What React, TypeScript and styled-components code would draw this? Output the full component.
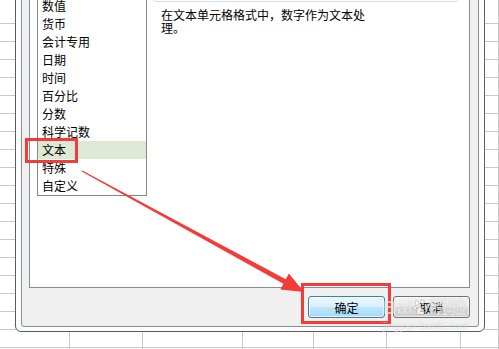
import styled, { createGlobalStyle } from "styled-components";

const GlobalStyle = createGlobalStyle`
  html, body {
    margin: 0;
    padding: 0;
    background: #fff;
    overflow: hidden;
  }
  #root {
    width: 499px;
    height: 349px;
  }
`;

const CJK = `"Noto Sans CJK SC", "Noto Sans", sans-serif`;

const Sheet = styled.div`
  position: relative;
  width: 499px;
  height: 349px;
  display: flex;
  overflow: hidden;
  background-image: repeating-linear-gradient(
    to bottom,
    transparent 0 17px,
    #c8c8c8 17px 18px
  );
  background-position: 0 6px;
`;

const Column = styled.div<{ $w?: number }>`
  flex: ${(p) => (p.$w ? `0 0 ${p.$w}px` : "1")};
  box-sizing: border-box;
  border-right: 1px solid #c8c8c8;
`;

const Dialog = styled.div`
  position: absolute;
  left: 15px;
  top: -40px;
  width: 470px;
  height: 372px;
  box-sizing: border-box;
  border: 1px solid #5c5c5c;
  border-radius: 0 0 6px 6px;
  background: #fbfdfe;
  padding: 5px 5px 4px;
  display: flex;
`;

const Frame = styled.div`
  flex: 1;
  border: 1px solid #8c8c8c;
  border-radius: 0 0 3px 3px;
  background: #f0f0f0;
  padding: 7px 8px 8px 7px;
  display: flex;
  flex-direction: column;
  gap: 8px;
`;

const Panel = styled.div`
  height: 314px;
  box-sizing: border-box;
  border: 1px solid #898c95;
  background: #fff;
  padding: 3px 0 0 7px;
  display: flex;
  align-items: flex-start;
`;

// the first entry (常规) is scrolled out of view above the window
const ListBox = styled.div`
  width: 110px;
  box-sizing: border-box;
  border: 1px solid #828790;
  background: #fff;
  padding-top: 18px;
  display: flex;
  flex-direction: column;
`;

const ListItem = styled.div<{ $selected?: boolean }>`
  height: 18px;
  line-height: 18px;
  padding-left: 4px;
  font-family: ${CJK};
  font-size: 12px;
  color: #000;
  white-space: nowrap;
  background: ${(p) => (p.$selected ? "#dde9d4" : "transparent")};
`;

const RightColumn = styled.div`
  width: 306px;
  margin-left: 6px;
  display: flex;
  flex-direction: column;
`;

const SampleBox = styled.div`
  height: 24px;
  box-sizing: border-box;
  border: 1px solid #d5dfe5;
  border-radius: 3px;
`;

const Description = styled.p`
  margin: 6px 0 0 8px;
  width: 210px;
  font-family: ${CJK};
  font-size: 12px;
  line-height: 13px;
  color: #000;
`;

const ButtonRow = styled.div`
  display: flex;
  justify-content: flex-end;
  gap: 8px;
`;

const Button = styled.button<{ $default?: boolean }>`
  width: 77px;
  height: 22px;
  padding: 0;
  box-sizing: border-box;
  border-radius: 3px;
  font-family: ${CJK};
  font-size: 12px;
  color: #000;
  border: 1px solid ${(p) => (p.$default ? "#3c7fb1" : "#707070")};
  background: ${(p) =>
    p.$default
      ? "linear-gradient(#eaf6fd, #d9f0fc 50%, #bee6fd 50%, #a7d9f5)"
      : "linear-gradient(#f2f2f2, #ebebeb 50%, #dddddd 50%, #cfcfcf)"};
  box-shadow: inset 0 0 0 1px
    ${(p) => (p.$default ? "rgba(255,255,255,0.7)" : "rgba(255,255,255,0.6)")};
`;

const Mark = styled.div<{ $x: number; $y: number; $w: number; $h: number }>`
  position: absolute;
  left: ${(p) => p.$x}px;
  top: ${(p) => p.$y}px;
  width: ${(p) => p.$w}px;
  height: ${(p) => p.$h}px;
  box-sizing: border-box;
  border: 3px solid #f23b3b;
`;

const Overlay = styled.svg`
  position: absolute;
  left: 0;
  top: 0;
  pointer-events: none;
`;

const Watermark = styled.div`
  position: absolute;
  left: 383px;
  top: 297px;
  display: flex;
  flex-direction: column;
  align-items: flex-start;
  color: rgba(255, 255, 255, 0.7);
  text-shadow: 0 0 1px rgba(120, 120, 120, 0.5);
  opacity: 0.8;
  pointer-events: none;
`;

const WatermarkLogo = styled.div`
  display: flex;
  align-items: center;
  font-family: "Liberation Sans", ${CJK};
  font-weight: bold;
  font-size: 19px;
  line-height: 22px;
`;

const WatermarkSite = styled.div`
  font-family: "Liberation Sans", sans-serif;
  font-size: 10px;
  line-height: 12px;
  margin-top: 2px;
  letter-spacing: 0.3px;
`;

const categories = [
  "数值",
  "货币",
  "会计专用",
  "日期",
  "时间",
  "百分比",
  "分数",
  "科学记数",
  "文本",
  "特殊",
  "自定义",
];

const columns = [70, 73, 100, 71, 73, 74];

export default function App() {
  return (
    <>
      <GlobalStyle />
      <Sheet>
        {columns.map((w, i) => (
          <Column key={i} $w={w} />
        ))}
        <Column />

        <Dialog>
          <Frame>
            <Panel>
              <ListBox>
                {categories.map((c) => (
                  <ListItem key={c} $selected={c === "文本"}>
                    {c}
                  </ListItem>
                ))}
              </ListBox>
              <RightColumn>
                <SampleBox />
                <Description>在文本单元格格式中，数字作为文本处理。</Description>
              </RightColumn>
            </Panel>
            <ButtonRow>
              <Button $default>确定</Button>
              <Button>取消</Button>
            </ButtonRow>
          </Frame>
        </Dialog>

        <Mark $x={25} $y={138} $w={53} $h={25} />
        <Mark $x={301} $y={283} $w={90} $h={41} />

        <Overlay width="499" height="349" viewBox="0 0 499 349">
          <polygon
            fill="#f23b3b"
            points="82.3,170.5 285.8,279.3 288.9,273.6 304,292 280.3,289.4 283.4,283.7 81.7,171.5"
          />
        </Overlay>

        <Watermark>
          <WatermarkLogo>
            Bai
            <svg width="16" height="18" viewBox="0 0 16 18">
              <g fill="rgba(255,255,255,0.8)" stroke="rgba(120,120,120,0.5)" strokeWidth="0.8">
                <ellipse cx="4" cy="4" rx="1.8" ry="2.4" />
                <ellipse cx="9.5" cy="3" rx="1.8" ry="2.4" />
                <ellipse cx="2" cy="9" rx="1.6" ry="2" />
                <ellipse cx="13.5" cy="8" rx="1.6" ry="2" />
                <path d="M7.5 8 C4 8 2.5 15 5 15.5 C6.5 16 8 14.5 9.5 15.5 C12 16.5 12.5 11 7.5 8 Z" />
              </g>
            </svg>
            经验
          </WatermarkLogo>
          <WatermarkSite>jingyan.baidu.com</WatermarkSite>
        </Watermark>
      </Sheet>
    </>
  );
}
